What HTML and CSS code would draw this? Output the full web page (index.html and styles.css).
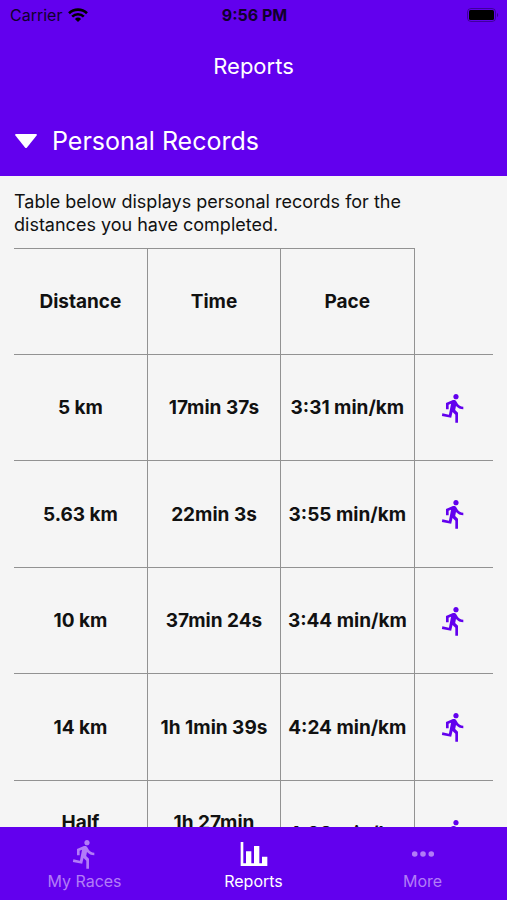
FILE: index.html
```html
<!DOCTYPE html>
<html lang="en">
<head>
<meta charset="utf-8">
<meta name="viewport" content="width=device-width, initial-scale=1">
<title>Reports</title>
<link rel="stylesheet" href="styles.css">
</head>
<body>
<svg class="sprite" aria-hidden="true">
  <symbol id="run" viewBox="0 0 24 24"><path d="M13.49 5.48c1.1 0 2-.9 2-2s-.9-2-2-2-2 .9-2 2 .9 2 2 2zm-3.6 13.9l1-4.4 2.1 2v6h2v-7.5l-2.1-2 .6-3c1.3 1.5 3.3 2.5 5.5 2.5v-2c-1.9 0-3.5-1-4.3-2.4l-1-1.6c-.4-.6-1-1-1.7-1-.3 0-.5.1-.8.1l-5.2 2.2v4.7h2v-3.4l1.8-.7-1.6 8.1-4.9-1-.4 2 7 1.4z"/></symbol>
  <symbol id="chart" viewBox="0 0 24 24"><path d="M22 21H2V3h2v16h2v-9h4v9h2V6h4v13h2v-5h4v7z"/></symbol>
  <symbol id="dots" viewBox="0 0 24 24"><circle cx="5.8" cy="12" r="2.1"/><circle cx="12" cy="12" r="2.1"/><circle cx="18.2" cy="12" r="2.1"/></symbol>
</svg>
<div class="app">
  <header class="top">
    <div class="status">
      <span class="carrier">Carrier
        <svg class="wifi" viewBox="0 0 20 14" aria-hidden="true"><g fill="none" stroke="currentColor" stroke-width="2.6"><path d="M1 5.2a13 13 0 0 1 18 0"/><path d="M4.2 8.6a8.3 8.3 0 0 1 11.6 0"/></g><path d="M10 14l-3.1-3.1a4.4 4.4 0 0 1 6.2 0z" fill="currentColor"/></svg>
      </span>
      <span class="clock">9:56 PM</span>
      <svg class="battery" viewBox="0 0 32 14" aria-hidden="true"><rect x=".5" y=".5" width="28" height="13" rx="3.5" fill="none" stroke="currentColor" opacity=".35"/><rect x="2" y="2" width="25" height="10" rx="1.5" fill="currentColor"/><path d="M30 5c1.6.6 1.6 3.4 0 4z" fill="currentColor" opacity=".4"/></svg>
    </div>
    <h1 class="title">Reports</h1>
  </header>
  <button class="section" type="button" aria-expanded="true">
    <svg class="caret" viewBox="0 0 22 14" aria-hidden="true"><path d="M1 0h20q1.400.3.6 1.500L12 13.400q-1 1-2 0L.4 1.500Q-.4.300 1 0z"/></svg>
    Personal Records
  </button>
  <main class="content">
    <p class="intro">Table below displays personal records for the distances you have completed.</p>
    <table class="records">
      <thead>
        <tr><th scope="col">Distance</th><th scope="col">Time</th><th scope="col">Pace</th><td class="action"></td></tr>
      </thead>
      <tbody>
        <tr><td>5 km</td><td>17min 37s</td><td>3:31 min/km</td><td class="action"><a href="#race-1" aria-label="View race"><svg class="icon"><use href="#run"/></svg></a></td></tr>
        <tr><td>5.63 km</td><td>22min 3s</td><td>3:55 min/km</td><td class="action"><a href="#race-2" aria-label="View race"><svg class="icon"><use href="#run"/></svg></a></td></tr>
        <tr><td>10 km</td><td>37min 24s</td><td>3:44 min/km</td><td class="action"><a href="#race-3" aria-label="View race"><svg class="icon"><use href="#run"/></svg></a></td></tr>
        <tr><td>14 km</td><td>1h 1min 39s</td><td>4:24 min/km</td><td class="action"><a href="#race-4" aria-label="View race"><svg class="icon"><use href="#run"/></svg></a></td></tr>
        <tr><td>Half<br>Marathon</td><td>1h 27min<br>36s</td><td>4:09 min/km</td><td class="action"><a href="#race-5" aria-label="View race"><svg class="icon"><use href="#run"/></svg></a></td></tr>
      </tbody>
    </table>
  </main>
  <nav class="tabs">
    <a class="tab" href="#races"><svg class="icon"><use href="#run"/></svg>My Races</a>
    <a class="tab active" href="#reports" aria-current="page"><svg class="icon"><use href="#chart"/></svg>Reports</a>
    <a class="tab" href="#more"><svg class="icon"><use href="#dots"/></svg>More</a>
  </nav>
</div>
</body>
</html>
```
FILE: styles.css
```css
* { box-sizing: border-box; }

body {
  margin: 0;
  background: #f5f5f5;
  color: #111;
  font-family: Inter, "Liberation Sans", sans-serif;
}

.sprite { position: absolute; width: 0; height: 0; }

.app {
  display: flex;
  flex-direction: column;
  height: 100vh;
}

.top {
  background: #6200ee;
  color: #fff;
}

.status {
  display: grid;
  grid-template-columns: 1fr auto 1fr;
  align-items: center;
  height: 30px;
  padding: 0 8px 0 10px;
  color: #10002c;
  font-size: 16px;
}

.carrier { display: flex; align-items: center; gap: 6px; }
.wifi { width: 20px; height: 14px; color: #000; }
.clock { font-weight: 700; }
.battery { justify-self: end; width: 32px; height: 14px; color: #000; }

.title {
  margin: 0;
  padding: 20px 0 24px;
  font-size: 22px;
  font-weight: 400;
  line-height: 32px;
  text-align: center;
}

.section {
  display: flex;
  align-items: center;
  gap: 15px;
  height: 70px;
  flex: none;
  padding: 0 15px;
  border: 0;
  background: #6200ee;
  color: #fff;
  font: 400 25px Inter, "Liberation Sans", sans-serif;
}

.caret { width: 22px; height: 14px; fill: #fff; }

.content {
  flex: 1;
  min-height: 0;
  overflow-y: auto;
  padding: 14px 14px 0;
  scrollbar-width: none;
}

.intro {
  max-width: 420px;
  margin: 0 0 12px;
  font-size: 18px;
  line-height: 23px;
}

.records {
  width: 100%;
  table-layout: fixed;
  border-collapse: collapse;
  font-size: 19px;
  line-height: 23px;
  text-align: center;
}

.records tr { height: 106px; }
.records tbody tr:nth-child(even) { height: 107px; }

.records th,
.records td {
  padding: 0 4px;
  border: 1px solid #929292;
  border-left: 0;
  font-weight: 700;
}

.records .action { width: 79px; padding: 0; border-right: 0; }
.records thead .action { border-top: 0; }
.action a { display: inline-block; color: #6200ee; vertical-align: middle; }

.icon { display: block; width: 32px; height: 32px; fill: currentColor; }

.tabs {
  display: flex;
  flex: none;
  height: 73px;
  background: #6200ee;
}

.tab {
  display: flex;
  flex: 1;
  flex-direction: column;
  align-items: center;
  padding-top: 11px;
  color: #b27cf7;
  font-size: 16px;
  line-height: 22px;
  text-decoration: none;
}

.tab.active { color: #fff; }
```
